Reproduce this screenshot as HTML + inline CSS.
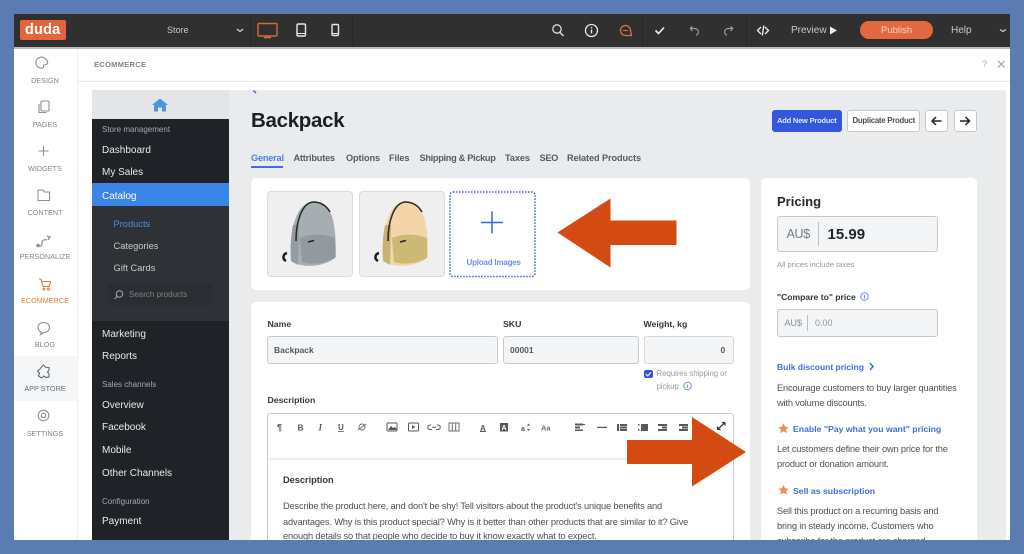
<!DOCTYPE html>
<html><head><meta charset="utf-8"><style>
html,body{margin:0;padding:0;width:1024px;height:554px;overflow:hidden;background:#5a7cb0}
body{position:relative;font-family:"Liberation Sans",sans-serif}
#a{position:absolute;left:0;top:0;width:1024px;height:554px;overflow:hidden;filter:blur(.35px)}
.b{position:absolute}
.t{position:absolute;white-space:nowrap;line-height:1}
.s{text-align:center;width:64px;left:13px;font-size:7.2px;color:#7f8488;letter-spacing:.05px}
.n{left:102px;font-size:10px;color:#e8eaec}
.h{left:102px;font-size:8px;color:#a4a8ac}
.u{font-size:9.2px;font-weight:bold;color:#565b61;top:153.500px}
.l{font-size:8.7px;font-weight:bold;color:#33373b}
.p{font-size:9.3px;color:#4d5257;letter-spacing:-.17px}
.k{font-size:8.7px;font-weight:bold;color:#3f6ee0}
.i{position:absolute;box-sizing:border-box;background:#f4f5f6;border:1.5px solid #c6c9cc;border-radius:3px}
svg{position:absolute;overflow:visible}
</style></head><body><div id="a">
<div class="b" style="left:14px;top:14px;width:996px;height:526px;background:#fff"></div>
<div class="b" style="left:14px;top:14px;width:996px;height:33px;background:#303030"></div>
<div class="b" style="left:14px;top:47px;width:996px;height:2px;background:#bbb"></div>
<div class="b" style="left:20px;top:20px;width:46px;height:20px;background:#e2663c;border-radius:2px"></div>
<div class="t" style="left:25px;top:23px;font-size:14.500px;font-weight:bold;color:#fff;letter-spacing:.2px">duda</div>
<div class="t" style="left:167px;top:26px;font-size:9px;color:#c9c9c9">Store</div>
<svg style="left:0;top:0" width="1024" height="60" fill="none">
<path d="M237 29l3 2.500 3-2.500" stroke="#ccc" stroke-width="1.400"/>
<rect x="258" y="23.500" width="19" height="12.500" rx="1" stroke="#d5693c" stroke-width="1.400"/><path d="M264 37.500h7" stroke="#d5693c" stroke-width="1.600"/>
<rect x="297" y="24" width="8.500" height="12" rx="1.300" stroke="#e8e8e8" stroke-width="1.400"/><path d="M297 33.500h8.500" stroke="#e8e8e8"/>
<rect x="332" y="24.500" width="6.500" height="11" rx="1.200" stroke="#e8e8e8" stroke-width="1.400"/><path d="M332 33.500h6.500" stroke="#e8e8e8"/>
<circle cx="557" cy="29" r="4.200" stroke="#ddd" stroke-width="1.300"/><path d="M560 32.500l3.500 3.500" stroke="#ddd" stroke-width="1.500"/>
<circle cx="591.500" cy="30.500" r="6" stroke="#e8e8e8" stroke-width="1.300"/><path d="M591.500 29.500v4M591.500 27v1.400" stroke="#e8e8e8" stroke-width="1.400"/>
<path d="M631 36h-6a5 5 0 1 1 5-5z" stroke="#d9703f" stroke-width="1.300" transform="translate(.5 -.5)"/><path d="M623 30.500h5" stroke="#d9703f" stroke-width="1"/>
<path d="M655.500 30.500l3 3 5.500-6" stroke="#f0f0f0" stroke-width="1.600"/>
<path d="M690 28.500h5a3.500 3.500 0 0 1 1 6.800M690 28.500l2.500-2M690 28.500l2.500 2.500" stroke="#9b9b9b" stroke-width="1.200"/>
<path d="M733 28.500h-5a3.500 3.500 0 0 0-1 6.800M733 28.500l-2.500-2M733 28.500l-2.500 2.500" stroke="#9b9b9b" stroke-width="1.200"/>
<path d="M761 27l-3.500 3.500 3.500 3.500M765 27l3.500 3.500-3.500 3.500M763.800 25.500l-1.500 10" stroke="#eee" stroke-width="1.300"/>
<path d="M830 26.500l7 4-7 4z" fill="#f2f2f2"/>
<path d="M1000 29.500l3 2 3-2" stroke="#ccc" stroke-width="1.300"/>
</svg>
<div class="b" style="left:250px;top:14px;width:1px;height:33px;background:#292929"></div>
<div class="b" style="left:352px;top:14px;width:1px;height:33px;background:#292929"></div>
<div class="b" style="left:642px;top:14px;width:1px;height:33px;background:#292929"></div>
<div class="b" style="left:746px;top:14px;width:1px;height:33px;background:#292929"></div>
<div class="t" style="left:791px;top:25.500px;font-size:10px;color:#c9c9c9">Preview</div>
<div class="b" style="left:860px;top:21px;width:73px;height:18px;border-radius:9px;background:#e4683f"></div>
<div class="t" style="left:881px;top:25.500px;font-size:9.500px;color:#f6d6c8">Publish</div>
<div class="t" style="left:951px;top:25.500px;font-size:10px;color:#c9c9c9">Help</div>

<div class="b" style="left:77px;top:49px;width:1px;height:491px;background:#eceef0"></div>
<div class="b" style="left:78px;top:81px;width:932px;height:1px;background:#e6e8ea"></div>
<div class="t" style="left:94px;top:61px;font-size:7.500px;font-weight:bold;color:#80858a;letter-spacing:.3px">ECOMMERCE</div>
<div class="t" style="left:982px;top:60px;font-size:9px;color:#a8acb0">?</div>
<svg style="left:0;top:0" width="1024" height="80" fill="none"><path d="M998 61l6.500 6.500M1004.500 61l-6.500 6.500" stroke="#a0a4a8" stroke-width="1.200"/></svg>

<div class="b" style="left:14px;top:356px;width:63px;height:45px;background:#f5f6f7"></div>
<div class="t s" style="top:76.500px">DESIGN</div>
<div class="t s" style="top:121px">PAGES</div>
<div class="t s" style="top:165px">WIDGETS</div>
<div class="t s" style="top:209px">CONTENT</div>
<div class="t s" style="top:253px">PERSONALIZE</div>
<div class="t s" style="top:297px;color:#e07a3e">ECOMMERCE</div>
<div class="t s" style="top:341px">BLOG</div>
<div class="t s" style="top:385px;color:#666b70">APP STORE</div>
<div class="t s" style="top:430px">SETTINGS</div>
<svg style="left:0;top:0" width="80" height="450" fill="none" stroke="#8b9094" stroke-width="1.100">
<path d="M43.500 57.500a5.500 5.500 0 1 0-1 10.500c1.500 0 1-1.500 1-2.500s2.500-.5 3.500-1.500 1.500-4-3.500-6.500z"/>
<rect x="41" y="101" width="8" height="10" rx="1"/><path d="M39 104v8.500h7.500"/>
<path d="M43.500 146v10M38.500 151h10"/>
<path d="M38 190h5l1.500 2h5v8.500H38z"/>
<path d="M38 246c3 1 4-1 4-3s1-4 5-3M47 236l3 1-2 3" stroke-width="1.300"/><circle cx="38" cy="245.500" r="1.200" fill="#8b9094"/>
<g stroke="#e07a3e"><path d="M39 279h2l2 7.500h6l1.500-5H42"/><circle cx="44" cy="289" r="1"/><circle cx="48.500" cy="289" r="1"/></g>
<path d="M43.500 322.500c-3.500 0-5.500 2.400-5.500 5s2 4.500 3.500 4.800l-1 2.200 3.500-2c3 0 5.500-2 5.500-5s-2.500-5-6-5z"/>
<path d="M41 367.500l2.500-2.500 2.500 2.500h3v3l-1.500 1.500 1.500 2v3l-3 .5-2-1.500-2.500 2-3-2 1-2.500-2-2.500 2.500-2z" stroke="#666b70"/>
<circle cx="43.500" cy="415.500" r="5.300"/><circle cx="43.500" cy="415.500" r="2.200"/>
</svg>

<div class="b" style="left:92px;top:90px;width:914px;height:450px;background:#e9ebed"></div>
<div class="b" style="left:92px;top:90px;width:137px;height:450px;background:#1f2227"></div>
<div class="b" style="left:92px;top:90px;width:137px;height:29px;background:#e3e5e8"></div>
<div class="b" style="left:92px;top:183px;width:137px;height:23px;background:#3a86e8"></div>
<div class="b" style="left:92px;top:206px;width:137px;height:115px;background:#2e3135"></div>
<div class="b" style="left:108px;top:284px;width:104px;height:21px;background:#2a2d31"></div>
<svg style="left:0;top:0" width="260" height="320" fill="none">
<path d="M152 105l8-6.500 8 6.500h-2v6.500h-4v-4h-4v4h-4V105z" fill="#4d94dc"/>
<path d="M253.500 90.500l2.500 2.500" stroke="#3f5fd0" stroke-width="1.300"/>
<circle cx="119.500" cy="294" r="3.200" stroke="#a4a8ac"/><path d="M117 296.500l-2.500 2.500" stroke="#a4a8ac"/>
</svg>
<div class="t h" style="top:126px">Store management</div>
<div class="t n" style="top:146px">Dashboard</div>
<div class="t n" style="top:168px">My Sales</div>
<div class="t n" style="top:191.500px;color:#fff">Catalog</div>
<div class="t n" style="left:113.500px;top:220px;font-size:9.300px;color:#4a8fe0">Products</div>
<div class="t n" style="left:113.500px;top:242px;font-size:9.300px;color:#c8cacc">Categories</div>
<div class="t n" style="left:113.500px;top:264px;font-size:9.300px;color:#c8cacc">Gift Cards</div>
<div class="t" style="left:129px;top:291px;font-size:8px;color:#7b7f83">Search products</div>
<div class="t n" style="top:329.500px">Marketing</div>
<div class="t n" style="top:352px">Reports</div>
<div class="t h" style="top:381px">Sales channels</div>
<div class="t n" style="top:400.500px">Overview</div>
<div class="t n" style="top:423px">Facebook</div>
<div class="t n" style="top:446px">Mobile</div>
<div class="t n" style="top:468.500px">Other Channels</div>
<div class="t h" style="top:498px">Configuration</div>
<div class="t n" style="top:517px">Payment</div>

<div class="t" style="left:251px;top:111px;font-size:20.500px;font-weight:bold;color:#1c1e21;letter-spacing:-.3px">Backpack</div>
<div class="b" style="left:772px;top:110px;width:70px;height:22px;border-radius:3px;background:#3257dc"></div>
<div class="t" style="left:777px;top:117px;font-size:7.500px;font-weight:bold;color:#dfe5fb;letter-spacing:-.2px">Add New Product</div>
<div class="b" style="left:847px;top:110px;width:73px;height:22px;box-sizing:border-box;border-radius:3px;background:#fff;border:1px solid #c6c9cc"></div>
<div class="t" style="left:852.500px;top:117px;font-size:7.800px;font-weight:bold;color:#4c5055;letter-spacing:-.25px">Duplicate Product</div>
<div class="b" style="left:925px;top:110px;width:23px;height:22px;box-sizing:border-box;border-radius:3px;background:#fff;border:1px solid #c6c9cc"></div>
<div class="b" style="left:954px;top:110px;width:23px;height:22px;box-sizing:border-box;border-radius:3px;background:#fff;border:1px solid #c6c9cc"></div>
<svg style="left:0;top:0" width="1024" height="140" fill="none" stroke="#222" stroke-width="1.500"><path d="M941.500 121h-9M936 117l-4 4 4 4M960 121h9M965.500 117l4 4-4 4"/></svg>

<div class="t u" style="left:251px;color:#4a7fe0;letter-spacing:-.2px">General</div>
<div class="b" style="left:251px;top:166px;width:32px;height:1.500px;background:#3f6ee0"></div>
<div class="t u" style="left:293.500px;letter-spacing:-.2px">Attributes</div>
<div class="t u" style="left:346px;letter-spacing:-.1px">Options</div>
<div class="t u" style="left:389px;letter-spacing:-.1px">Files</div>
<div class="t u" style="left:419.500px;letter-spacing:-.3px">Shipping &amp; Pickup</div>
<div class="t u" style="left:505px;letter-spacing:-.1px">Taxes</div>
<div class="t u" style="left:539.500px;letter-spacing:-.3px">SEO</div>
<div class="t u" style="left:567px;letter-spacing:-.1px">Related Products</div>

<div class="b" style="left:251px;top:178px;width:499px;height:112px;background:#fff;border-radius:5px"></div>
<div class="b" style="left:251px;top:302px;width:499px;height:238px;background:#fff;border-radius:5px 5px 0 0"></div>
<div class="b" style="left:761px;top:178px;width:216px;height:362px;background:#fff;border-radius:5px 5px 0 0"></div>

<div class="b" style="left:267px;top:191px;width:86px;height:86px;box-sizing:border-box;background:#efefef;border:1px solid #dcdcdc;border-radius:4px"></div>
<div class="b" style="left:359px;top:191px;width:86px;height:86px;box-sizing:border-box;background:#efefef;border:1px solid #dcdcdc;border-radius:4px"></div>
<svg style="left:267px;top:191px" width="86" height="86">
<path d="M19 70c-4-2-3-7 1-8" stroke="#1e1e1e" stroke-width="2.500" fill="none"/>
<path d="M24 70C23 50 25 34 30 24 34 15 40 11 46 11c8 0 15 4 18 12 4 9 5 27 5 43-11 10-33 12-45 4z" fill="#a7aeb2"/>
<path d="M24 70C23 56 24 44 26 34l6 0-1 40z" fill="#949ca1"/>
<path d="M29 50C29 30 35 12 46 11c7 0 13 3 17 10" stroke="#2b2b2b" stroke-width="1.600" fill="none"/>
<path d="M33 47c11-5 25-4 35 0l0 20c-11 6-24 7-33 4z" fill="#929a9f"/>
<path d="M41 51l6-1.500" stroke="#222" stroke-width="1.500"/>
</svg>
<svg style="left:359px;top:191px" width="86" height="86">
<path d="M19 70c-4-2-3-7 1-8" stroke="#1e1e1e" stroke-width="2.500" fill="none"/>
<path d="M24 70C23 50 25 34 30 24 34 15 40 11 46 11c8 0 15 4 18 12 4 9 5 27 5 43-11 10-33 12-45 4z" fill="#f3d5a8"/>
<path d="M24 70C23 56 24 44 26 34l6 0-1 40z" fill="#c6b272"/>
<path d="M29 50C29 30 35 12 46 11c7 0 13 3 17 10" stroke="#2b2b2b" stroke-width="1.600" fill="none"/>
<path d="M33 47c11-5 25-4 35 0l0 20c-11 6-24 7-33 4z" fill="#cdb976"/>
<path d="M41 51l6-1.500" stroke="#222" stroke-width="1.500"/>
</svg>
<svg style="left:0;top:0" width="1024" height="300" fill="none">
<rect x="450" y="192" width="85" height="84.500" rx="3" stroke="#3f5fd0" stroke-width="1.500" stroke-dasharray="1.500 1.500"/>
<path d="M492 211.500v22M481 222.500h22" stroke="#3f63d6" stroke-width="1.500"/>
<path d="M557.500 232.500L610.500 198.500v22h66v24.500h-66v22.500z" fill="#d34a12"/></svg>
<div class="t" style="left:466.500px;top:259px;font-size:8px;font-weight:bold;color:#6f8de6;letter-spacing:-.2px">Upload Images</div>

<div class="t l" style="left:267.500px;top:319.500px">Name</div>
<div class="t l" style="left:503px;top:319.500px">SKU</div>
<div class="t l" style="left:643.500px;top:319.500px">Weight, kg</div>
<div class="i" style="left:267px;top:336px;width:231px;height:28px"></div>
<div class="i" style="left:503px;top:336px;width:136px;height:28px"></div>
<div class="i" style="left:643.500px;top:336px;width:90px;height:28px;border-color:#d6d8da"></div>
<div class="t" style="left:274px;top:346px;font-weight:bold;font-size:8.500px;color:#54595e">Backpack</div>
<div class="t" style="left:510px;top:346px;font-weight:bold;font-size:8.500px;color:#54595e">00001</div>
<div class="t" style="left:720.500px;top:346px;font-weight:bold;font-size:8.500px;color:#54595e">0</div>
<div class="b" style="left:644px;top:369.500px;width:8.500px;height:8.500px;border-radius:2px;background:#2f55d4"></div>
<svg style="left:0;top:0" width="1024" height="400" fill="none"><path d="M645.700 374l2 2 3.300-3.700" stroke="#fff" stroke-width="1.100"/>
<circle cx="687.500" cy="386" r="3.800" stroke="#6f8de6"/><path d="M687.500 384.500v3.500" stroke="#6f8de6"/></svg>
<div class="t" style="left:656.500px;top:370px;font-size:8px;color:#9a9ea2;letter-spacing:-.15px">Requires shipping or</div>
<div class="t" style="left:656.500px;top:382.500px;font-size:8px;color:#9a9ea2;letter-spacing:-.15px">pickup</div>
<div class="t l" style="left:267.500px;top:396px">Description</div>
<div class="b" style="left:267px;top:413px;width:467px;height:140px;box-sizing:border-box;border:1.500px solid #c6c9cc;border-radius:3px"></div>
<div class="b" style="left:269px;top:458px;width:463px;height:1.500px;background:#eceef0"></div>
<svg style="left:265px;top:411px" width="480" height="40" fill="#55595e" stroke="none">
<text x="12" y="19.500" font-family="Liberation Sans" font-size="9" font-weight="bold">¶</text>
<text x="32.500" y="19.500" font-family="Liberation Sans" font-size="8.500" font-weight="bold">B</text>
<text x="53.500" y="19.500" font-family="Liberation Serif" font-size="9" font-weight="bold" font-style="italic">I</text>
<text x="73" y="19" font-family="Liberation Sans" font-size="8" text-decoration="underline" font-weight="bold">U</text>
<g fill="none" stroke="#6c7075"><circle cx="97" cy="16" r="3"/><path d="M93 19l8-6"/></g>
<rect x="122" y="12" width="10" height="8" rx="1" fill="none" stroke="#55595e"/><path d="M123 19l3-4 2 2 2-1 2 3z"/>
<rect x="143.500" y="12" width="10" height="8" rx="1" fill="none" stroke="#55595e"/><path d="M147 14l3.500 2-3.500 2z"/>
<path d="M166 14h-1a2.200 2.200 0 0 0 0 4.500h2M172 14h1a2.200 2.200 0 0 1 0 4.500h-2M167 16.200h4" fill="none" stroke="#55595e"/>
<rect x="184" y="12" width="10" height="8" fill="none" stroke="#6c7075"/><path d="M187.300 12v8M190.700 12v8" stroke="#6c7075"/>
<text x="215" y="20" font-family="Liberation Sans" font-size="8" font-weight="bold">A</text><rect x="215" y="20" width="6" height="1"/>
<rect x="235" y="12" width="8" height="8.500"/><text x="236.500" y="19" font-family="Liberation Sans" font-size="7" font-weight="bold" fill="#fff">A</text>
<text x="256" y="20" font-family="Liberation Sans" font-size="7" font-weight="bold">a</text><path d="M263.500 12.500l1.500 2h-3zM263.500 20l1.500-2h-3z"/>
<text x="276" y="19.500" font-family="Liberation Sans" font-size="7.500" font-weight="bold" fill="#6c7075">Aa</text>
<path d="M310 12.500h8v2h-8zM310 15.500h5v2h-5zM310 18.500h8v1.500h-8zM316 13h4v1h-4z"/>
<rect x="332" y="15.800" width="10" height="1.200"/>
<path d="M352 13h2v7h-2zM355 13h7v2h-7zM355 15.500h7v2h-7zM355 18h7v2h-7z"/>
<path d="M373 13h1.500v1.500H373zM373 18h1.500v1.500H373zM376 13h7v7h-7z"/>
<path d="M393 13h9v2h-9zM397 15.500h5v2h-5zM393 18h9v2h-9z"/>
<path d="M414 13h9v2h-9zM417 15.500h6v2h-6zM414 18h9v2h-9z"/>
</svg>
<svg style="left:0;top:0" width="1024" height="554" fill="none"><path d="M627 440h65v-23l54 35-54 34.500V464h-65z" fill="#d34a12"/>
<path d="M717.500 429.500l7.500-7M717.500 429.500v-3M717.500 429.500h3M725 422.500h-3M725 422.500v3" stroke="#333" stroke-width="1.300"/></svg>
<div class="t" style="left:283px;top:476px;font-size:9.300px;font-weight:bold;color:#33373b;letter-spacing:-.05px">Description</div>
<div class="t p" style="left:283px;top:502px">Describe the product here, and don't be shy! Tell visitors about the product's unique benefits and</div>
<div class="t p" style="left:283px;top:517.500px">advantages. Why is this product special? Why is it better than other products that are similar to it? Give</div>
<div class="t p" style="left:283px;top:532px">enough details so that people who decide to buy it know exactly what to expect.</div>

<div class="t" style="left:777px;top:195px;font-size:13px;font-weight:bold;color:#25282b">Pricing</div>
<div class="i" style="left:777px;top:216px;width:161px;height:36px"></div>
<div class="b" style="left:817.500px;top:222px;width:1px;height:24px;background:#bcbfc2"></div>
<div class="t" style="left:786.500px;top:228px;font-size:12.500px;color:#777c81;letter-spacing:-.3px">AU$</div>
<div class="t" style="left:827.500px;top:227px;font-size:15px;font-weight:bold;color:#212427">15.99</div>
<div class="t" style="left:777px;top:261px;font-size:7.600px;color:#94989c">All prices include taxes</div>
<div class="t l" style="left:777px;top:293px;font-size:8.600px">"Compare to" price</div>
<svg style="left:0;top:0" width="1024" height="500" fill="none"><circle cx="864.500" cy="296.500" r="3.800" stroke="#6f8de6"/><path d="M864.500 295v3.500" stroke="#6f8de6"/>
<path d="M870 363l3 3.500-3 3.500" stroke="#3f6ee0" stroke-width="1.500"/>
<path d="M783.500 423.500l1.600 3.200 3.500.5-2.500 2.400.7 3.500-3.300-1.700-3.300 1.700.7-3.500-2.500-2.400 3.500-.5zM783.500 485l1.600 3.200 3.500.5-2.500 2.400.7 3.500-3.300-1.700-3.300 1.700.7-3.500-2.500-2.400 3.500-.5z" fill="#ee8d5c"/></svg>
<div class="i" style="left:777px;top:309px;width:161px;height:28px"></div>
<div class="b" style="left:806.500px;top:315px;width:1px;height:16px;background:#bcbfc2"></div>
<div class="t" style="left:784.500px;top:319px;font-size:9px;color:#898d91">AU$</div>
<div class="t" style="left:815px;top:319px;font-size:9px;color:#93979b">0.00</div>
<div class="t k" style="left:777px;top:363px;font-size:8.500px">Bulk discount pricing</div>
<div class="t p" style="left:777px;top:383.500px">Encourage customers to buy larger quantities</div>
<div class="t p" style="left:777px;top:398.500px">with volume discounts.</div>
<div class="t k" style="left:793px;top:424.500px">Enable "Pay what you want" pricing</div>
<div class="t p" style="left:777px;top:445px">Let customers define their own price for the</div>
<div class="t p" style="left:777px;top:460px">product or donation amount.</div>
<div class="t k" style="left:793px;top:486.500px">Sell as subscription</div>
<div class="t p" style="left:777px;top:507px">Sell this product on a recurring basis and</div>
<div class="t p" style="left:777px;top:522px">bring in steady income. Customers who</div>
<div class="t p" style="left:777px;top:536.500px">subscribe for the product are charged</div>

<div class="b" style="left:0;top:540px;width:1024px;height:14px;background:#5a7cb0"></div>
<div class="b" style="left:1010px;top:0;width:14px;height:554px;background:#5a7cb0"></div>
</div></body></html>
